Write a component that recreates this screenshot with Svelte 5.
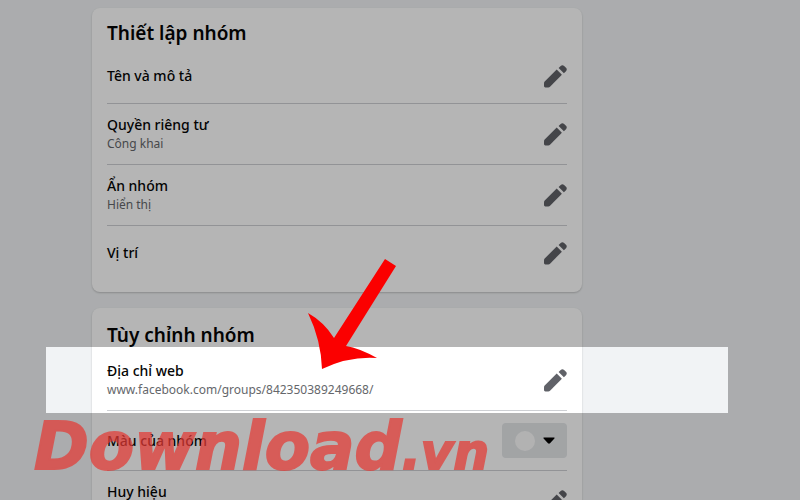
<script>
  const setup = [
    { title: 'Tên và mô tả' },
    { title: 'Quyền riêng tư', note: 'Công khai' },
    { title: 'Ẩn nhóm', note: 'Hiển thị' },
    { title: 'Vị trí' }
  ];
  const custom = [
    { title: 'Địa chỉ web', note: 'www.facebook.com/groups/842350389249668/', spotlight: true },
    { title: 'Màu của nhóm', color: true },
    { title: 'Huy hiệu', note: '\u00a0' }
  ];
</script>

{#snippet row(item)}
  <li class="row">
    <div class="label">
      <span class="title">{item.title}</span>
      {#if item.note}<span class="note">{item.note}</span>{/if}
    </div>
    {#if item.color}
      <button class="swatch" type="button" aria-label={item.title} aria-haspopup="listbox">
        <span class="dot"></span>
        <svg width="12" height="7" viewBox="0 0 12 7" aria-hidden="true">
          <path d="M1 .5h10c.6 0 .8.7.4 1.1L7 6.2c-.6.6-1.4.6-2 0L.6 1.6C.2 1.2.4.5 1 .5z" />
        </svg>
      </button>
    {:else}
      <button class="edit" type="button" aria-label={item.title}>
        <svg width="23" height="24" viewBox="0 0 23 24" aria-hidden="true">
          <path d="M0 19.200c0-.7.2-1.200.7-1.700L12.700 5.500l5.200 5.200L6 22.700c-.5.5-1 .7-1.700.7H1.400c-.8 0-1.400-.6-1.400-1.400z" />
          <path d="M14.600 3.900l2.100-2c1-1 2.400-1 3.400 0l1.900 1.900c1 1 1 2.400 0 3.400l-2.100 2z" />
        </svg>
      </button>
    {/if}
    {#if item.spotlight}<span class="spotlight"></span>{/if}
  </li>
{/snippet}

<main>
  <div class="column">
    <section class="card setup">
      <h2>Thiết lập nhóm</h2>
      <ul>
        {#each setup as item}{@render row(item)}{/each}
      </ul>
    </section>
    <section class="card custom">
      <h2>Tùy chỉnh nhóm</h2>
      <ul>
        {#each custom as item}{@render row(item)}{/each}
      </ul>
    </section>
  </div>

  <svg class="arrow" width="90" height="112" viewBox="0 0 90 112" aria-hidden="true">
    <path d="M78 1L89 8L39 88Q52 90 70 100Q42 98 15 111Q14 82 1 55Q17 64 27 80Z" />
  </svg>
  <div class="watermark">Download<span>.vn</span></div>
</main>

<style>
  main {
    position: relative;
    height: 100vh;
    overflow: hidden;
    background: #f1f3f5;
    font-family: 'Noto Sans', 'Open Sans', sans-serif;
    color: #050505;
  }
  .column {
    display: flex;
    flex-direction: column;
    gap: 16px;
    max-width: 490px;
    margin-left: 92px;
    padding-top: 8px;
  }
  .card {
    padding: 10px 15px 12px;
    border-radius: 8px;
    background: #fff;
    box-shadow: 0 1px 2px rgba(0, 0, 0, 0.2);
  }
  .custom {
    padding-top: 12px;
  }
  h2 {
    margin: 0;
    font-size: 19px;
    line-height: 30px;
    font-weight: 600;
  }
  ul {
    margin: 0;
    padding: 0;
    list-style: none;
  }
  .row {
    position: relative;
    box-sizing: border-box;
    display: flex;
    align-items: center;
    justify-content: space-between;
    min-height: 61px;
    border-bottom: 1px solid #ced0d4;
  }
  .setup .row:first-child {
    min-height: 56px;
  }
  .setup .row:last-child {
    min-height: 54px;
    border-bottom: 0;
  }
  .custom .row + .row {
    min-height: 60px;
  }
  .label {
    display: flex;
    flex-direction: column;
  }
  .title {
    font-size: 14px;
    line-height: 20px;
    font-weight: 500;
  }
  .note {
    font-size: 12px;
    line-height: 18px;
    color: #65676b;
  }
  button {
    border: 0;
    padding: 0;
    cursor: pointer;
  }
  .edit {
    display: flex;
    background: none;
    fill: #606268;
  }
  .swatch {
    display: flex;
    align-items: center;
    justify-content: center;
    gap: 8px;
    width: 65px;
    height: 35px;
    border-radius: 4px;
    background: #e4e7e9;
  }
  .dot {
    width: 20px;
    height: 20px;
    border-radius: 50%;
    background: #fbfbfb;
  }
  .spotlight {
    position: absolute;
    z-index: 1;
    inset: -3px -161px -3px -61px;
    box-shadow: 0 0 0 2000px rgba(0, 0, 0, 0.29);
    pointer-events: none;
  }
  .arrow {
    position: absolute;
    z-index: 2;
    left: 307px;
    top: 258px;
    fill: #fb0000;
  }
  .watermark {
    position: absolute;
    z-index: 2;
    left: 34px;
    top: 409px;
    font: italic 700 66px/76px 'DejaVu Sans', sans-serif;
    color: #e53a35;
    -webkit-text-stroke: 2px #e53a35;
    opacity: 0.72;
    white-space: nowrap;
    pointer-events: none;
  }
  .watermark span {
    font-size: 50px;
  }
</style>
